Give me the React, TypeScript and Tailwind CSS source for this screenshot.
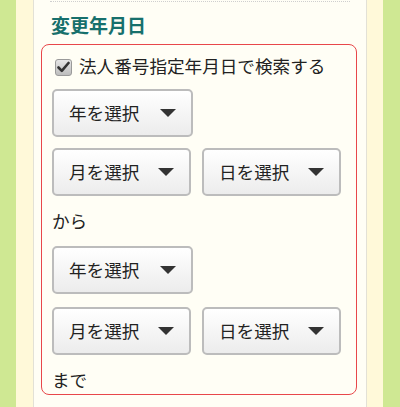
import React from "react";

function Arrow() {
  return (
    <svg width="16" height="8" viewBox="0 0 16 8" className="shrink-0">
      <path d="M0 0 H16 L8 8 Z" fill="#333" />
    </svg>
  );
}

function Select({ label, w }: { label: string; w: string }) {
  return (
    <div
      className={`${w} h-[48px] flex items-center justify-between pl-[15px] pr-[15px] border-2 border-[#bcbcbc] rounded-[5px] bg-gradient-to-b from-[#ffffff] to-[#ececec] text-[17.6px] text-[#222]`}
    >
      <span className="leading-none">{label}</span>
      <Arrow />
    </div>
  );
}

export default function App() {
  return (
    <div
      className="flex w-[400px] h-[407px] overflow-hidden"
      style={{ fontFamily: '"Noto Sans CJK JP", "Noto Sans", sans-serif' }}
    >
      <div className="w-[16px] shrink-0 bg-[#cfe893]" />
      <div className="w-[17px] shrink-0 bg-[#fff9d9]" />
      <div className="w-[334px] shrink-0 bg-[#fffef5] border-l border-r border-[#e3e1d6] flex flex-col px-[7px]">
        <div className="mx-[9px] mt-[1px] border-t border-dotted border-[#cfcfcf]" />
        <h2 className="mt-[9px] ml-[10px] text-[19px] leading-[28px] font-bold text-[#17706c]">
          変更年月日
        </h2>
        <div className="mt-[5px] w-[316px] border border-[#e8474a] rounded-[8px] flex flex-col pl-[10px] pb-[1px]">
          <label className="mt-[8px] h-[26px] flex items-center gap-[7px] text-[17.6px] text-[#222]">
            <span className="ml-[3px] mt-[2px] w-[17px] h-[17px] rounded-[3px] border border-[#9a9a9a] bg-gradient-to-b from-[#e6e6e6] to-[#bdbdbd] flex items-center justify-center">
              <svg width="13" height="12" viewBox="0 0 13 12">
                <path
                  d="M1.5 6.5 L4.8 9.8 L11.5 2"
                  fill="none"
                  stroke="#333"
                  strokeWidth="2.6"
                  strokeLinecap="round"
                  strokeLinejoin="round"
                />
              </svg>
            </span>
            <span className="leading-none">法人番号指定年月日で検索する</span>
          </label>
          <div className="mt-[10px] flex">
            <Select label="年を選択" w="w-[141px]" />
          </div>
          <div className="mt-[11px] flex gap-[11px]">
            <Select label="月を選択" w="w-[139px]" />
            <Select label="日を選択" w="w-[139px]" />
          </div>
          <div className="mt-[12px] h-[26px] flex items-center text-[17.6px] text-[#222]">から</div>
          <div className="mt-[12px] flex">
            <Select label="年を選択" w="w-[141px]" />
          </div>
          <div className="mt-[13px] flex gap-[11px]">
            <Select label="月を選択" w="w-[139px]" />
            <Select label="日を選択" w="w-[139px]" />
          </div>
          <div className="mt-[12px] h-[26px] flex items-center text-[17.6px] text-[#222]">まで</div>
        </div>
      </div>
      <div className="w-[16px] shrink-0 bg-[#fff9d9]" />
      <div className="w-[17px] shrink-0 bg-[#cfe893]" />
    </div>
  );
}
